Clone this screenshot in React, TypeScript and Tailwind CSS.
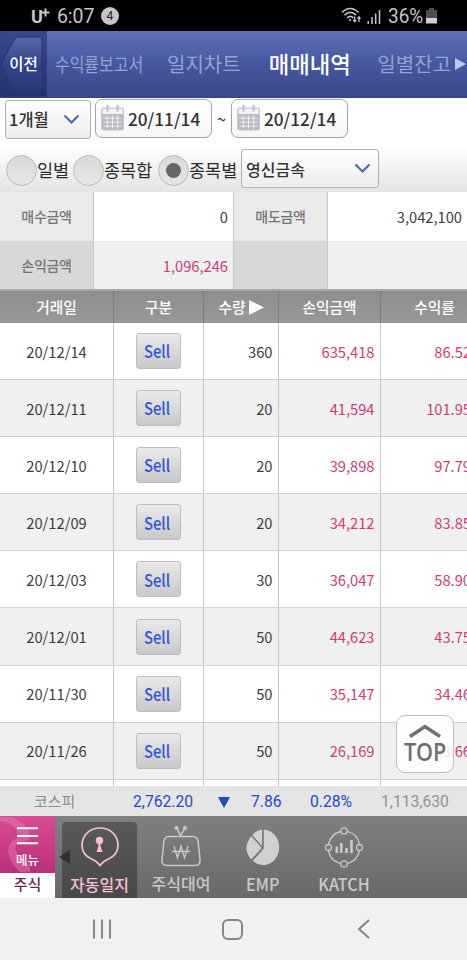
import clsx from "clsx"

const trades = [
  { date: "20/12/14", qty: "360", profit: "635,418", rate: "86.52" },
  { date: "20/12/11", qty: "20", profit: "41,594", rate: "101.95" },
  { date: "20/12/10", qty: "20", profit: "39,898", rate: "97.79" },
  { date: "20/12/09", qty: "20", profit: "34,212", rate: "83.85" },
  { date: "20/12/03", qty: "30", profit: "36,047", rate: "58.90" },
  { date: "20/12/01", qty: "50", profit: "44,623", rate: "43.75" },
  { date: "20/11/30", qty: "50", profit: "35,147", rate: "34.46" },
  { date: "20/11/26", qty: "50", profit: "26,169", rate: "33.66" },
]

const columns = "grid grid-cols-[114px_90px_75px_102px_108px] w-[489px]"

function StatusBar() {
  return (
    <div className="flex h-[31px] items-center bg-black pl-[31px] text-[#c6c6c6] font-['Roboto',sans-serif]">
      <span className="relative top-[1px] text-[18px] font-bold leading-none">U</span>
      <svg width="9" height="9" viewBox="0 0 9 9" className="relative -top-[3px] -ml-[2px]">
        <path d="M4.5 0.5v8M0.5 4.5h8" stroke="#c6c6c6" strokeWidth="2" />
      </svg>
      <span className="relative top-[1px] ml-[7px] w-[37px] text-[19.5px] leading-none">6:07</span>
      <span className="ml-[7px] flex h-[18px] w-[18px] items-center justify-center rounded-full bg-[#c6c6c6] text-[12px] text-[#222]">4</span>
      <svg width="21" height="17" viewBox="0 0 21 17" className="ml-[222px]" fill="none" stroke="#c6c6c6" strokeWidth="1.6">
        <path d="M1 5.5Q9 -2.5 17.5 5.5" />
        <path d="M3.5 8.2Q9.2 2.7 15 8.2" />
        <path d="M6.2 10.8Q9.3 8 12.3 10.8" />
        <circle cx="9" cy="13" r="1.1" fill="#c6c6c6" stroke="none" />
        <path d="M13.7 9.5v5M12.2 12.8l1.5 1.9 1.5-1.9M18 15v-5M16.5 11.7l1.5-1.9 1.5 1.9" strokeWidth="1.3" />
      </svg>
      <svg width="14" height="15" viewBox="0 0 14 15" className="ml-[5px] mt-[1px]">
        <path d="M1.2 15v-3M5 15V8M8.7 15V4.5M12.5 15V1" stroke="#c6c6c6" strokeWidth="1.5" />
      </svg>
      <span className="ml-[7px] w-[36px] origin-left text-[20px] leading-none scale-x-[.95]">36%</span>
      <svg width="11" height="16" viewBox="0 0 11 16" className="ml-[2px]">
        <path d="M3 0h5v2h3v8H0V2h3z" fill="#4e4e4e" />
        <path d="M0 10h11v5.5H0z" fill="#d0d0d0" />
      </svg>
    </div>
  )
}

function TopTabs() {
  return (
    <nav className="relative flex h-[67px] items-center overflow-hidden border-b border-[#34437f] bg-gradient-to-b from-[#5f70b9] via-[#4657a1] to-[#394989] whitespace-nowrap text-[#94a2d3]">
      <div className="relative flex h-full w-[47px] shrink-0 items-center justify-center bg-gradient-to-b from-[#39488d] to-[#25326f]">
        <svg width="47" height="67" viewBox="0 0 47 67" className="absolute inset-0">
          <defs>
            <linearGradient id="back" x1="0" y1="0" x2="0" y2="1">
              <stop offset="0" stopColor="#5766a6" />
              <stop offset=".5" stopColor="#34438a" />
              <stop offset="1" stopColor="#293777" />
            </linearGradient>
          </defs>
          <path d="M18 6h21q3 0 3 3v50q0 3-3 3H17Q14 61 1 33L14 9q2-3 4-3z" fill="url(#back)" stroke="#253269" strokeWidth="1" />
        </svg>
        <span className="relative text-[15.5px] font-medium text-white">이전</span>
      </div>
      <span className="ml-[8px] w-[89px] origin-left text-[19px] scale-x-[.84]">수익률보고서</span>
      <span className="ml-[23px] w-[75px] text-[20px]">일지차트</span>
      <span className="ml-[27px] w-[84px] text-[22.3px] font-medium text-white">매매내역</span>
      <span className="ml-[25px] w-[76px] text-[20px]">일별잔고</span>
      <svg width="12" height="14" viewBox="0 0 12 14" className="ml-[2px] shrink-0">
        <path d="M0 1l11 6-11 6z" fill="#bcc8ec" />
      </svg>
    </nav>
  )
}

function Chevron() {
  return (
    <svg width="17" height="11" viewBox="0 0 17 11" fill="none" stroke="#5666b0" strokeWidth="2.2">
      <path d="M1.5 1.5l7 7 7-7" />
    </svg>
  )
}

function DateBox({ value }: { value: string }) {
  return (
    <div className="flex h-[39px] w-[117px] items-center rounded-[7px] border border-[#a3a3a6] bg-gradient-to-b from-white to-[#f5f5f5] pl-[5px]">
      <svg width="23" height="26" viewBox="0 0 23 26" fill="none" className="relative -top-[1px]">
        <rect x=".7" y="3.2" width="21.6" height="21.6" rx="2" fill="#f2f2f4" stroke="#c5c6ce" strokeWidth="1.3" />
        <path d="M1 9h21v14q0 2-2 2H3q-2 0-2-2z" fill="#b9bac3" />
        <path d="M2.5 13.2h18M2.5 17.2h18M2.5 21.2h18M6.3 10.5v13M11.5 10.5v13M16.7 10.5v13" stroke="#ededf0" />
        <path d="M6.5 0v6.5M16.5 0v6.5" stroke="#b9bac3" strokeWidth="2" />
      </svg>
      <span className="ml-[4px] text-[17.2px] font-medium text-[#333]">{value}</span>
    </div>
  )
}

function Radio({ label, checked, className }: { label: string; checked?: boolean; className?: string }) {
  return (
    <div className={clsx("flex shrink-0 items-center", className)}>
      <span className="flex h-[31px] w-[31px] shrink-0 items-center justify-center rounded-full border border-[#b9b9b9] bg-gradient-to-b from-[#dadada] to-[#e6e6e6]">
        {checked && <span className="h-[15px] w-[15px] rounded-full bg-[#666]" />}
      </span>
      <span className="whitespace-nowrap text-[17.5px] text-[#2b2b2b]">{label}</span>
    </div>
  )
}

function Filters() {
  return (
    <section className="h-[94px] bg-gradient-to-b from-white from-50% to-[#e4e4e4]">
      <div className="flex h-[43px] pl-[5px]">
        <div className="mt-[2px] flex h-[39px] w-[86px] items-center justify-between rounded-[3px] border border-[#b0b0b0] bg-gradient-to-b from-white to-[#ececec] pl-[3px] pr-[10px]">
          <span className="text-[16.5px] font-medium text-[#333]">1개월</span>
          <Chevron />
        </div>
        <div className="ml-[4px] mt-px"><DateBox value="20/11/14" /></div>
        <span className="w-[19px] pt-[8px] text-center text-[17px] text-[#333]">~</span>
        <div className="mt-px"><DateBox value="20/12/14" /></div>
      </div>
      <div className="flex h-[51px] items-start pl-[6px]">
        <Radio label="일별" className="mt-[14px] w-[67px]" />
        <Radio label="종목합" className="mt-[14px] w-[85px]" />
        <Radio label="종목별" checked className="mt-[14px] w-[83px]" />
        <div className="mt-[8px] flex h-[39px] w-[138px] items-center justify-between rounded-[3px] border border-[#b0b0b0] bg-gradient-to-b from-white to-[#ececec] pl-[4px] pr-[7px]">
          <span className="text-[16px] font-medium text-[#333]">영신금속</span>
          <Chevron />
        </div>
      </div>
    </section>
  )
}

function Summary() {
  const label = "flex items-center justify-center border-r border-[#c8c8c8] font-medium text-[14px] text-[#757575] tracking-[-0.3px]"
  const value = "flex items-center justify-end border-r border-[#c8c8c8] pr-[5px] text-[14.7px]"
  return (
    <section className="grid h-[99px] grid-cols-[94px_140px_94px_139px] grid-rows-[49px_48px] border-b-2 border-[#a8a8a8]">
      <div className={clsx(label, "bg-[#eaeaea]")}>매수금액</div>
      <div className={clsx(value, "bg-white pt-[2px] text-[#3c3c3c]")}>0</div>
      <div className={clsx(label, "bg-[#eaeaea]")}>매도금액</div>
      <div className={clsx(value, "border-r-0 bg-white pt-[2px] text-[#3c3c3c]")}>3,042,100</div>
      <div className={clsx(label, "bg-[#d8d8d8]")}>손익금액</div>
      <div className={clsx(value, "bg-[#f0f0f0] pt-[2px] text-[#d03a78]")}>1,096,246</div>
      <div className={clsx(label, "bg-[#d8d8d8]")} />
      <div className="bg-[#f0f0f0]" />
    </section>
  )
}

function TradeTable() {
  const head = "flex items-center justify-center border-r border-[#7d7d7d]"
  const cell = "flex items-center border-r border-[#c6c6c6]"
  return (
    <section className="relative h-[495px] overflow-hidden bg-white">
      <div className={clsx(columns, "h-[32px] bg-gradient-to-b from-[#8e8e8e] to-[#999] text-[14.7px] font-medium text-white")}>
        <div className={head}>거래일</div>
        <div className={head}>구분</div>
        <div className={clsx(head, "gap-[3px]")}>
          수량
          <svg width="15" height="15" viewBox="0 0 15 15"><path d="M0 0l15 7.5-15 7.5z" fill="#fff" /></svg>
        </div>
        <div className={head}>손익금액</div>
        <div className={head}>수익률</div>
      </div>
      {trades.map((trade) => (
        <div key={trade.date} className={clsx(columns, "h-[57.1px] border-b border-[#d2d2d2] text-[14.7px] text-[#3c3c3c] even:bg-white odd:bg-[#f0f0f0]")}>
          <div className={clsx(cell, "justify-center pt-[1px]")}>{trade.date}</div>
          <div className={clsx(cell, "justify-center")}>
            <button className="flex h-[36px] w-[45px] items-center justify-center rounded-[3px] border border-[#bebebe] bg-gradient-to-b from-[#e9e9e9] to-[#c9c9c9] text-[#2e56d8]">
              <span className="relative -left-[1px] text-[17px] font-medium scale-x-[.87]">Sell</span>
            </button>
          </div>
          <div className={clsx(cell, "justify-end pr-[5.5px] pt-[1px]")}>{trade.qty}</div>
          <div className={clsx(cell, "justify-end pr-[5.5px] pt-[1px] text-[#d03a78]")}>{trade.profit}</div>
          <div className="flex items-center justify-end pr-[18px] pt-[1px] text-[#d03a78]">{trade.rate}</div>
        </div>
      ))}
      <div className={clsx(columns, "h-[8px]")}>
        <div className={cell} />
        <div className={cell} />
        <div className={cell} />
        <div className={cell} />
      </div>
      <button className="absolute left-[396px] top-[424px] flex h-[58px] w-[58px] flex-col items-center rounded-[9px] border border-[#bdbdbd] bg-white/85 pt-[8px] text-[#6e6e6e]">
        <svg width="32" height="14" viewBox="0 0 32 14" fill="none" stroke="#707070" strokeWidth="3.5">
          <path d="M1 12.5L16 2.5l15 10" />
        </svg>
        <span className="mt-[1px] text-[24.5px] font-semibold leading-[26px] font-['Open_Sans',sans-serif] scale-x-[.88]">TOP</span>
      </button>
    </section>
  )
}

function Ticker() {
  return (
    <div className="flex h-[30px] items-center bg-[#e5e5e5] pt-[2px] text-[15.7px] text-[#2449cf] font-['Roboto','Noto_Sans_CJK_KR',sans-serif]">
      <span className="ml-[34px] w-[99px] text-[15px] text-[#8c8c8c]">코스피</span>
      <span className="w-[85px]">2,762.20</span>
      <svg width="12" height="11" viewBox="0 0 12 11"><path d="M0 0h12L6 11z" fill="#2449cf" /></svg>
      <span className="ml-[21px] w-[59px]">7.86</span>
      <span className="w-[72px]">0.28%</span>
      <span className="relative -left-[1px] text-[#929292]">1,113,630</span>
    </div>
  )
}

function BottomTabs() {
  const item = "flex flex-col items-center text-[16px] font-medium text-[#c9c9c9] whitespace-nowrap"
  return (
    <nav className="relative flex h-[82px] bg-gradient-to-b from-[#808080] to-[#696969]">
      <div className="w-[55px] shrink-0">
        <div className="relative flex h-[57px] flex-col items-center overflow-hidden bg-gradient-to-b from-[#d94c92] to-[#b92f79] text-white">
          <svg width="55" height="57" viewBox="0 0 55 57" className="absolute inset-0" fill="none">
            <path d="M0 1h12q12 5 17 14 3 10-8 12-9 1-4 10 4 8 13 11v8H20Q11 48 8 36 8 26 17 22 20 15 11 8 6 5 0 5z" fill="#e487b4" fillOpacity=".42" />
          </svg>
          <svg width="21" height="18" viewBox="0 0 21 18" className="relative mt-[11px]">
            <path d="M0 1.2h21M0 9h21M0 16.3h21" stroke="#fff" strokeWidth="2" />
          </svg>
          <span className="relative mt-[6px] text-[12.5px] font-medium leading-[18px]">메뉴</span>
        </div>
        <div className="flex h-[25px] items-center justify-center bg-white pb-[3px] text-[15px] font-medium text-[#71254f]">주식</div>
      </div>
      <div className={clsx(item, "ml-[7px] mt-[6px] h-[76px] w-[75px] rounded-t-[4px] bg-gradient-to-b from-[#595959] to-[#484848] text-[#f6bfd7]")}>
        <svg width="38" height="40" viewBox="0 0 38 40" className="mt-[5px]" fill="none">
          <path d="M19 38.5Q16 34 10.500 32C4 29 1 24 1 18.500 1 8 9 1 19 1s18 7 18 17.500C37 24 34 29 27.500 32 22 34 19 38.5 19 38.5z" stroke="#f6bfd7" strokeWidth="1.7" />
          <circle cx="18.5" cy="13.5" r="3.7" fill="#f6bfd7" />
          <path d="M17.5 15h2v4l2 6h-6l2-6z" fill="#f6bfd7" />
        </svg>
        <span className="mt-[5px] leading-[24px]">자동일지</span>
      </div>
      <svg width="12" height="14" viewBox="0 0 12 14" className="absolute left-[59px] top-[34px]"><path d="M11 0v14L0 7z" fill="#303030" /></svg>
      <div className={clsx(item, "ml-[3px] w-[82px] pt-[9px]")}>
        <svg width="40" height="42" viewBox="0 0 40 42" fill="none" stroke="#c9c9c9" strokeWidth="1.5">
          <path d="M8 11.500h24q4 0 5 4l2 19q.5 6-5 6H6q-5.500 0-5-6l2-19q1-4 5-4z" />
          <path d="M15.5 3l4 7.500 4.500-7.500" />
          <circle cx="15.5" cy="3" r="2" fill="#c9c9c9" stroke="none" />
          <circle cx="24" cy="3" r="2" fill="#c9c9c9" stroke="none" />
          <path d="M13 21l3.500 12L20 21l3.500 12L27 21M11 26.500h18" strokeWidth="1.3" />
        </svg>
        <span className="mt-[4px] leading-[24px]">주식대여</span>
      </div>
      <div className={clsx(item, "w-[81px] pt-[13px]")}>
        <svg width="34" height="37" viewBox="0 0 34 37" fill="#d0d0d0">
          <path d="M17.800 .5A16 17.800 0 1 1 6.800 31.800L17.800 19.500z" />
          <path d="M16 .5v16.500L6.300 6.200Q10 1.500 16 .5z" />
          <path d="M5.300 7.200L15.800 19 5.300 30.500Q-4.500 19 5.300 7.200z" />
        </svg>
        <span className="mt-[7px] text-[17px] leading-[22px] scale-x-[.95]">EMP</span>
      </div>
      <div className={clsx(item, "w-[82px] pt-[11px]")}>
        <svg width="38" height="41" viewBox="0 0 38 41" fill="none" stroke="#c9c9c9" strokeWidth="1.3">
          <path d="M22.500 4.500Q33 7.500 34.500 17M34.500 24Q32 34 22.500 36.500M15.500 36.500Q5.500 34 3.500 24M3.500 17Q6 7 15.500 4.500" />
          <circle cx="19" cy="4" r="3.2" />
          <circle cx="34.5" cy="20.5" r="3" />
          <circle cx="19" cy="37" r="3.2" />
          <circle cx="3.5" cy="20.5" r="3" />
          <path d="M11.800 26v-6.500M16.300 26v-10M21.500 26v-5M26.500 26V13" strokeWidth="2.6" />
        </svg>
        <span className="mt-[5px] text-[17px] leading-[22px] scale-x-[.95]">KATCH</span>
      </div>
    </nav>
  )
}

function SystemNav() {
  return (
    <div className="flex h-[62px] items-center bg-[#f1f1f1] pl-[92px]">
      <svg width="20" height="20" viewBox="0 0 20 20"><path d="M2 .5v19M10 .5v19M18 .5v19" stroke="#858585" strokeWidth="2" /></svg>
      <div className="ml-[110px] h-[21px] w-[21px] rounded-[6px] border-2 border-[#858585]" />
      <svg width="13" height="20" viewBox="0 0 13 20" className="ml-[114px]" fill="none" stroke="#858585" strokeWidth="2">
        <path d="M12 1L2 10l10 9" />
      </svg>
    </div>
  )
}

export default function App() {
  return (
    <div className="h-[960px] w-[467px] overflow-hidden bg-white font-['Noto_Sans_CJK_KR',sans-serif]">
      <StatusBar />
      <TopTabs />
      <Filters />
      <Summary />
      <TradeTable />
      <Ticker />
      <BottomTabs />
      <SystemNav />
    </div>
  )
}
